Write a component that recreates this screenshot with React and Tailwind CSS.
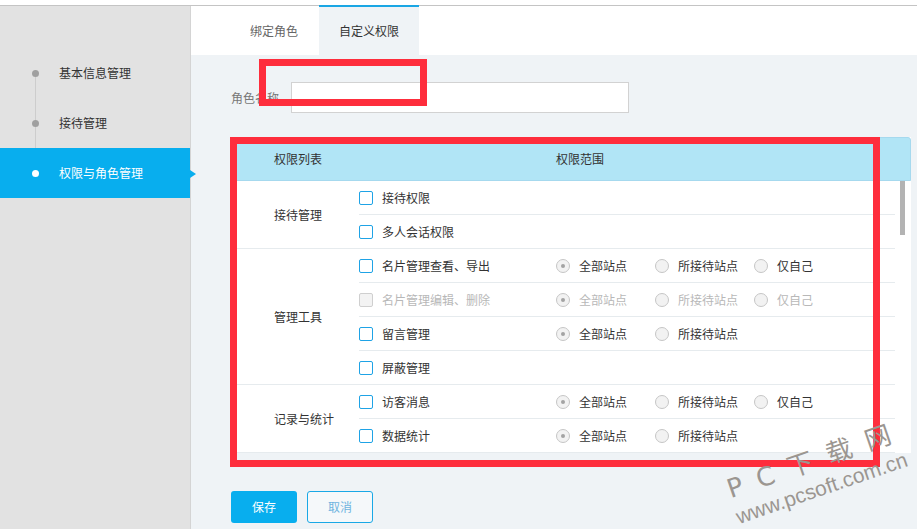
import React from 'react';

const groups = [
  {
    name: '接待管理',
    rows: [
      { label: '接待权限', radios: [] },
      { label: '多人会话权限', radios: [] },
    ],
  },
  {
    name: '管理工具',
    rows: [
      { label: '名片管理查看、导出', radios: ['全部站点', '所接待站点', '仅自己'] },
      { label: '名片管理编辑、删除', radios: ['全部站点', '所接待站点', '仅自己'], disabled: true },
      { label: '留言管理', radios: ['全部站点', '所接待站点'] },
      { label: '屏蔽管理', radios: [] },
    ],
  },
  {
    name: '记录与统计',
    rows: [
      { label: '访客消息', radios: ['全部站点', '所接待站点', '仅自己'] },
      { label: '数据统计', radios: ['全部站点', '所接待站点'] },
    ],
  },
];

function Radio({ label, checked, disabled }) {
  return (
    <div className="flex items-center w-[99px]">
      <span className="w-[14px] h-[14px] rounded-full border border-[#c6c6c6] bg-[#f2f2f2] flex items-center justify-center">
        {checked && <span className="w-[4px] h-[4px] rounded-full bg-[#a3a3a3]" />}
      </span>
      <span className={`ml-[9px] ${disabled ? 'text-[#b8b8b8]' : 'text-[#333]'}`}>{label}</span>
    </div>
  );
}

function PermRow({ row, last }) {
  return (
    <div className={`flex items-center ${last ? 'h-[33px]' : 'h-[34px] border-b border-[#e6ebee]'}`}>
      <div className="w-[197px] flex items-center">
        <span
          className={`w-[14px] h-[14px] rounded-[2px] border ${
            row.disabled ? 'border-[#cfcfcf] bg-[#f3f3f3]' : 'border-[#1ea3e6] bg-white'
          }`}
        />
        <span className={`ml-[9px] ${row.disabled ? 'text-[#b8b8b8]' : 'text-[#333]'}`}>{row.label}</span>
      </div>
      <div className="flex">
        {row.radios.map((r, i) => (
          <Radio key={r} label={r} checked={i === 0} disabled={row.disabled} />
        ))}
      </div>
    </div>
  );
}

export default function App() {
  return (
    <div
      className="relative w-[917px] h-[529px] overflow-hidden bg-white text-[12px] text-[#333]"
      style={{ fontFamily: '"Noto Sans CJK SC", "Liberation Sans", sans-serif' }}
    >
      <div className="h-[5px] bg-white" />
      <div className="flex border-t border-[#c4c4c4] h-[524px]">
        {/* sidebar */}
        <div className="w-[191px] bg-[#e2e2e2] border-r border-[#d4d4d4] pt-[42px]">
          <div className="relative">
            <div className="absolute left-[35px] top-[25px] h-[75px] w-px bg-[#cdcdcd]" />
            <div className="relative h-[50px] flex items-center">
              <span className="ml-[32px] w-[7px] h-[7px] rounded-full bg-[#a0a0a0]" />
              <span className="ml-[20px]">基本信息管理</span>
            </div>
            <div className="relative h-[50px] flex items-center">
              <span className="ml-[32px] w-[7px] h-[7px] rounded-full bg-[#a0a0a0]" />
              <span className="ml-[20px]">接待管理</span>
            </div>
            <div className="relative h-[50px] flex items-center bg-[#08aeee] text-white w-[190px]">
              <span className="ml-[32px] w-[7px] h-[7px] rounded-full bg-white" />
              <span className="ml-[20px]">权限与角色管理</span>
              <span className="absolute -right-[6px] top-[22px] w-0 h-0 border-y-[4px] border-y-transparent border-l-[6px] border-l-[#08aeee]" />
            </div>
          </div>
        </div>

        {/* main */}
        <div className="flex-1 flex flex-col">
          <div className="h-[49px] flex bg-white">
            <div className="w-[128px] pl-[59px] flex items-center text-[#666]">绑定角色</div>
            <div className="relative -mt-px w-[100px] h-[50px] border-t-2 border-[#1aa6e4] bg-[#eff3f6] flex items-center justify-center">
              自定义权限
            </div>
          </div>

          <div className="flex-1 bg-[#eff3f6] pl-[40px] pt-[27px]">
            <div className="flex items-center">
              <span className="w-[60px] text-[#777]">角色名称</span>
              <div className="w-[338px] h-[31px] bg-white border border-[#d2d2d2]" />
            </div>

            <div className="mt-[24px] w-[680px] bg-white">
              <div className="h-[44px] flex items-center bg-[#b1e5f6] border border-[#a6d9ee] rounded-t-[3px]">
                <span className="w-[324px] pl-[42px]">权限列表</span>
                <span>权限范围</span>
              </div>
              <div className="relative pr-[16px]">
                {groups.map((g) => (
                  <div key={g.name} className="flex border-b border-[#e6ebee]">
                    <div className="w-[128px] pl-[43px] flex items-center">{g.name}</div>
                    <div className="flex-1">
                      {g.rows.map((row, i) => (
                        <PermRow key={row.label} row={row} last={i === g.rows.length - 1} />
                      ))}
                    </div>
                  </div>
                ))}
                <div className="absolute right-[6px] top-0 w-[5px] h-[54px] bg-[#b3b3b3]" />
              </div>
            </div>

            <div className="mt-[38px] flex gap-[10px]">
              <button className="w-[66px] h-[32px] rounded-[3px] bg-[#08aeee] text-white">保存</button>
              <button className="w-[66px] h-[32px] rounded-[3px] border border-[#19a8e6] bg-[#f5f8fa] text-[#6fb4df]">
                取消
              </button>
            </div>
          </div>
        </div>
      </div>

      {/* red annotation boxes */}
      <div className="absolute left-[259px] top-[59px] w-[168px] h-[47px] border-[7px] border-[#fe2d3c]" />
      <div className="absolute left-[230px] top-[137px] w-[650px] h-[330px] border-[7px] border-[#fe2d3c]" />

      {/* watermark */}
      <div
        className="absolute left-[732px] top-[476px] h-[26px] leading-none text-[26px] tracking-[15px] text-[#9b9691] origin-bottom-left -rotate-[19deg] whitespace-nowrap"
        style={{ fontFamily: '"DejaVu Sans", "Noto Sans CJK SC", sans-serif' }}
      >
        PC下载网
      </div>
      <div
        className="absolute left-[740px] top-[506px] h-[21px] leading-none text-[21px] text-[#9b9691] origin-bottom-left -rotate-[19deg] whitespace-nowrap"
        style={{ fontFamily: '"Liberation Sans", sans-serif' }}
      >
        www.pcsoft.com.cn
      </div>
    </div>
  );
}
